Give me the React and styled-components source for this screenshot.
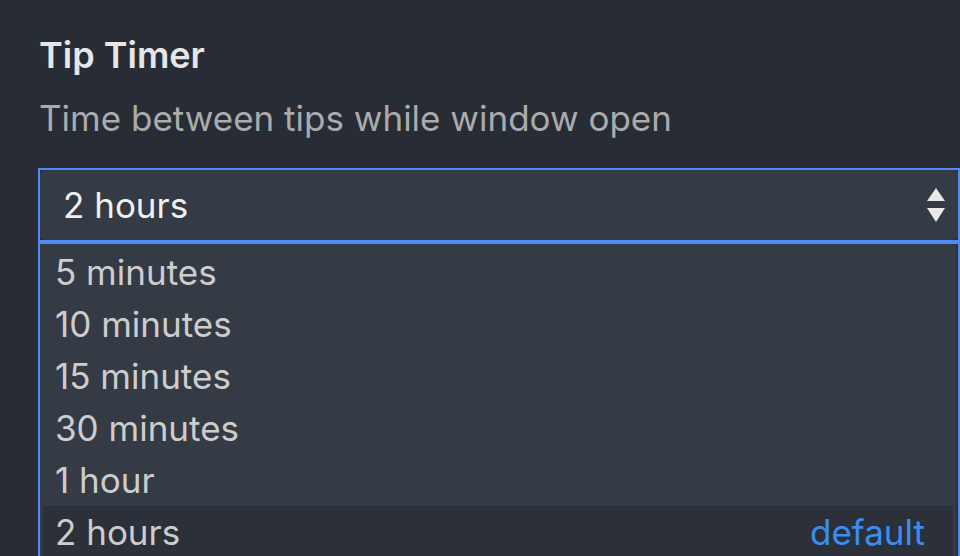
import React from "react";
import styled, { createGlobalStyle } from "styled-components";

const GlobalStyle = createGlobalStyle`
  html, body {
    margin: 0;
    padding: 0;
    background: #282c34;
    overflow: hidden;
  }
  body {
    font-family: Inter, "Noto Sans", "Liberation Sans", sans-serif;
    -webkit-font-smoothing: antialiased;
  }
`;

const Page = styled.div`
  width: 960px;
  height: 556px;
  padding: 33px 0 0 38px;
  box-sizing: border-box;
  overflow: hidden;
`;

const Title = styled.div`
  font-size: 36px;
  font-weight: 600;
  line-height: 44px;
  color: #e6e6e6;
  padding-left: 1px;
`;

const Description = styled.div`
  margin-top: 19px;
  font-size: 35px;
  line-height: 44px;
  color: #aaabad;
  padding-left: 1px;
`;

const SelectOutline = styled.div`
  margin-top: 28px;
  width: 922px;
  border: 2px solid #4f8af5;
  box-sizing: border-box;
`;

const SelectBox = styled.div`
  height: 70px;
  background: #353b45;
  border-radius: 5px;
  display: flex;
  align-items: center;
  justify-content: space-between;
  padding: 0 12px 0 23px;
  font-size: 35px;
  color: #f0f0f0;
`;

const Arrows = styled.svg`
  width: 20px;
  height: 36px;
  display: block;
`;

const List = styled.div`
  width: 922px;
  box-sizing: border-box;
  border: 2px solid #4f8af5;
  border-bottom: none;
  background: #353b45;
  padding: 2px 5px 0 3px;
  box-shadow: inset -2px 0 0 #2b2f37;
`;

const Option = styled.div`
  height: 52px;
  display: flex;
  align-items: center;
  justify-content: space-between;
  padding: 0 28px 0 12px;
  font-size: 35px;
  color: #cdcdcd;
  background: ${(p) => (p.selected ? "#2c3039" : "transparent")};
`;

const DefaultTag = styled.span`
  color: #3b8ef0;
`;

const options = ["5 minutes", "10 minutes", "15 minutes", "30 minutes", "1 hour", "2 hours"];

const App = () => {
  const value = "2 hours";
  return (
    <>
      <GlobalStyle />
      <Page>
        <Title>Tip Timer</Title>
        <Description>Time between tips while window open</Description>
        <SelectOutline>
          <SelectBox>
            <span>{value}</span>
            <Arrows viewBox="0 0 20 36">
              <polygon points="10,1 19,14 1,14" fill="#e8e8e8" />
              <polygon points="1,21 19,21 10,35" fill="#e8e8e8" />
            </Arrows>
          </SelectBox>
        </SelectOutline>
        <List>
          {options.map((o) => (
            <Option key={o} selected={o === value}>
              <span>{o}</span>
              {o === value && <DefaultTag>default</DefaultTag>}
            </Option>
          ))}
        </List>
      </Page>
    </>
  );
};

export default App;
